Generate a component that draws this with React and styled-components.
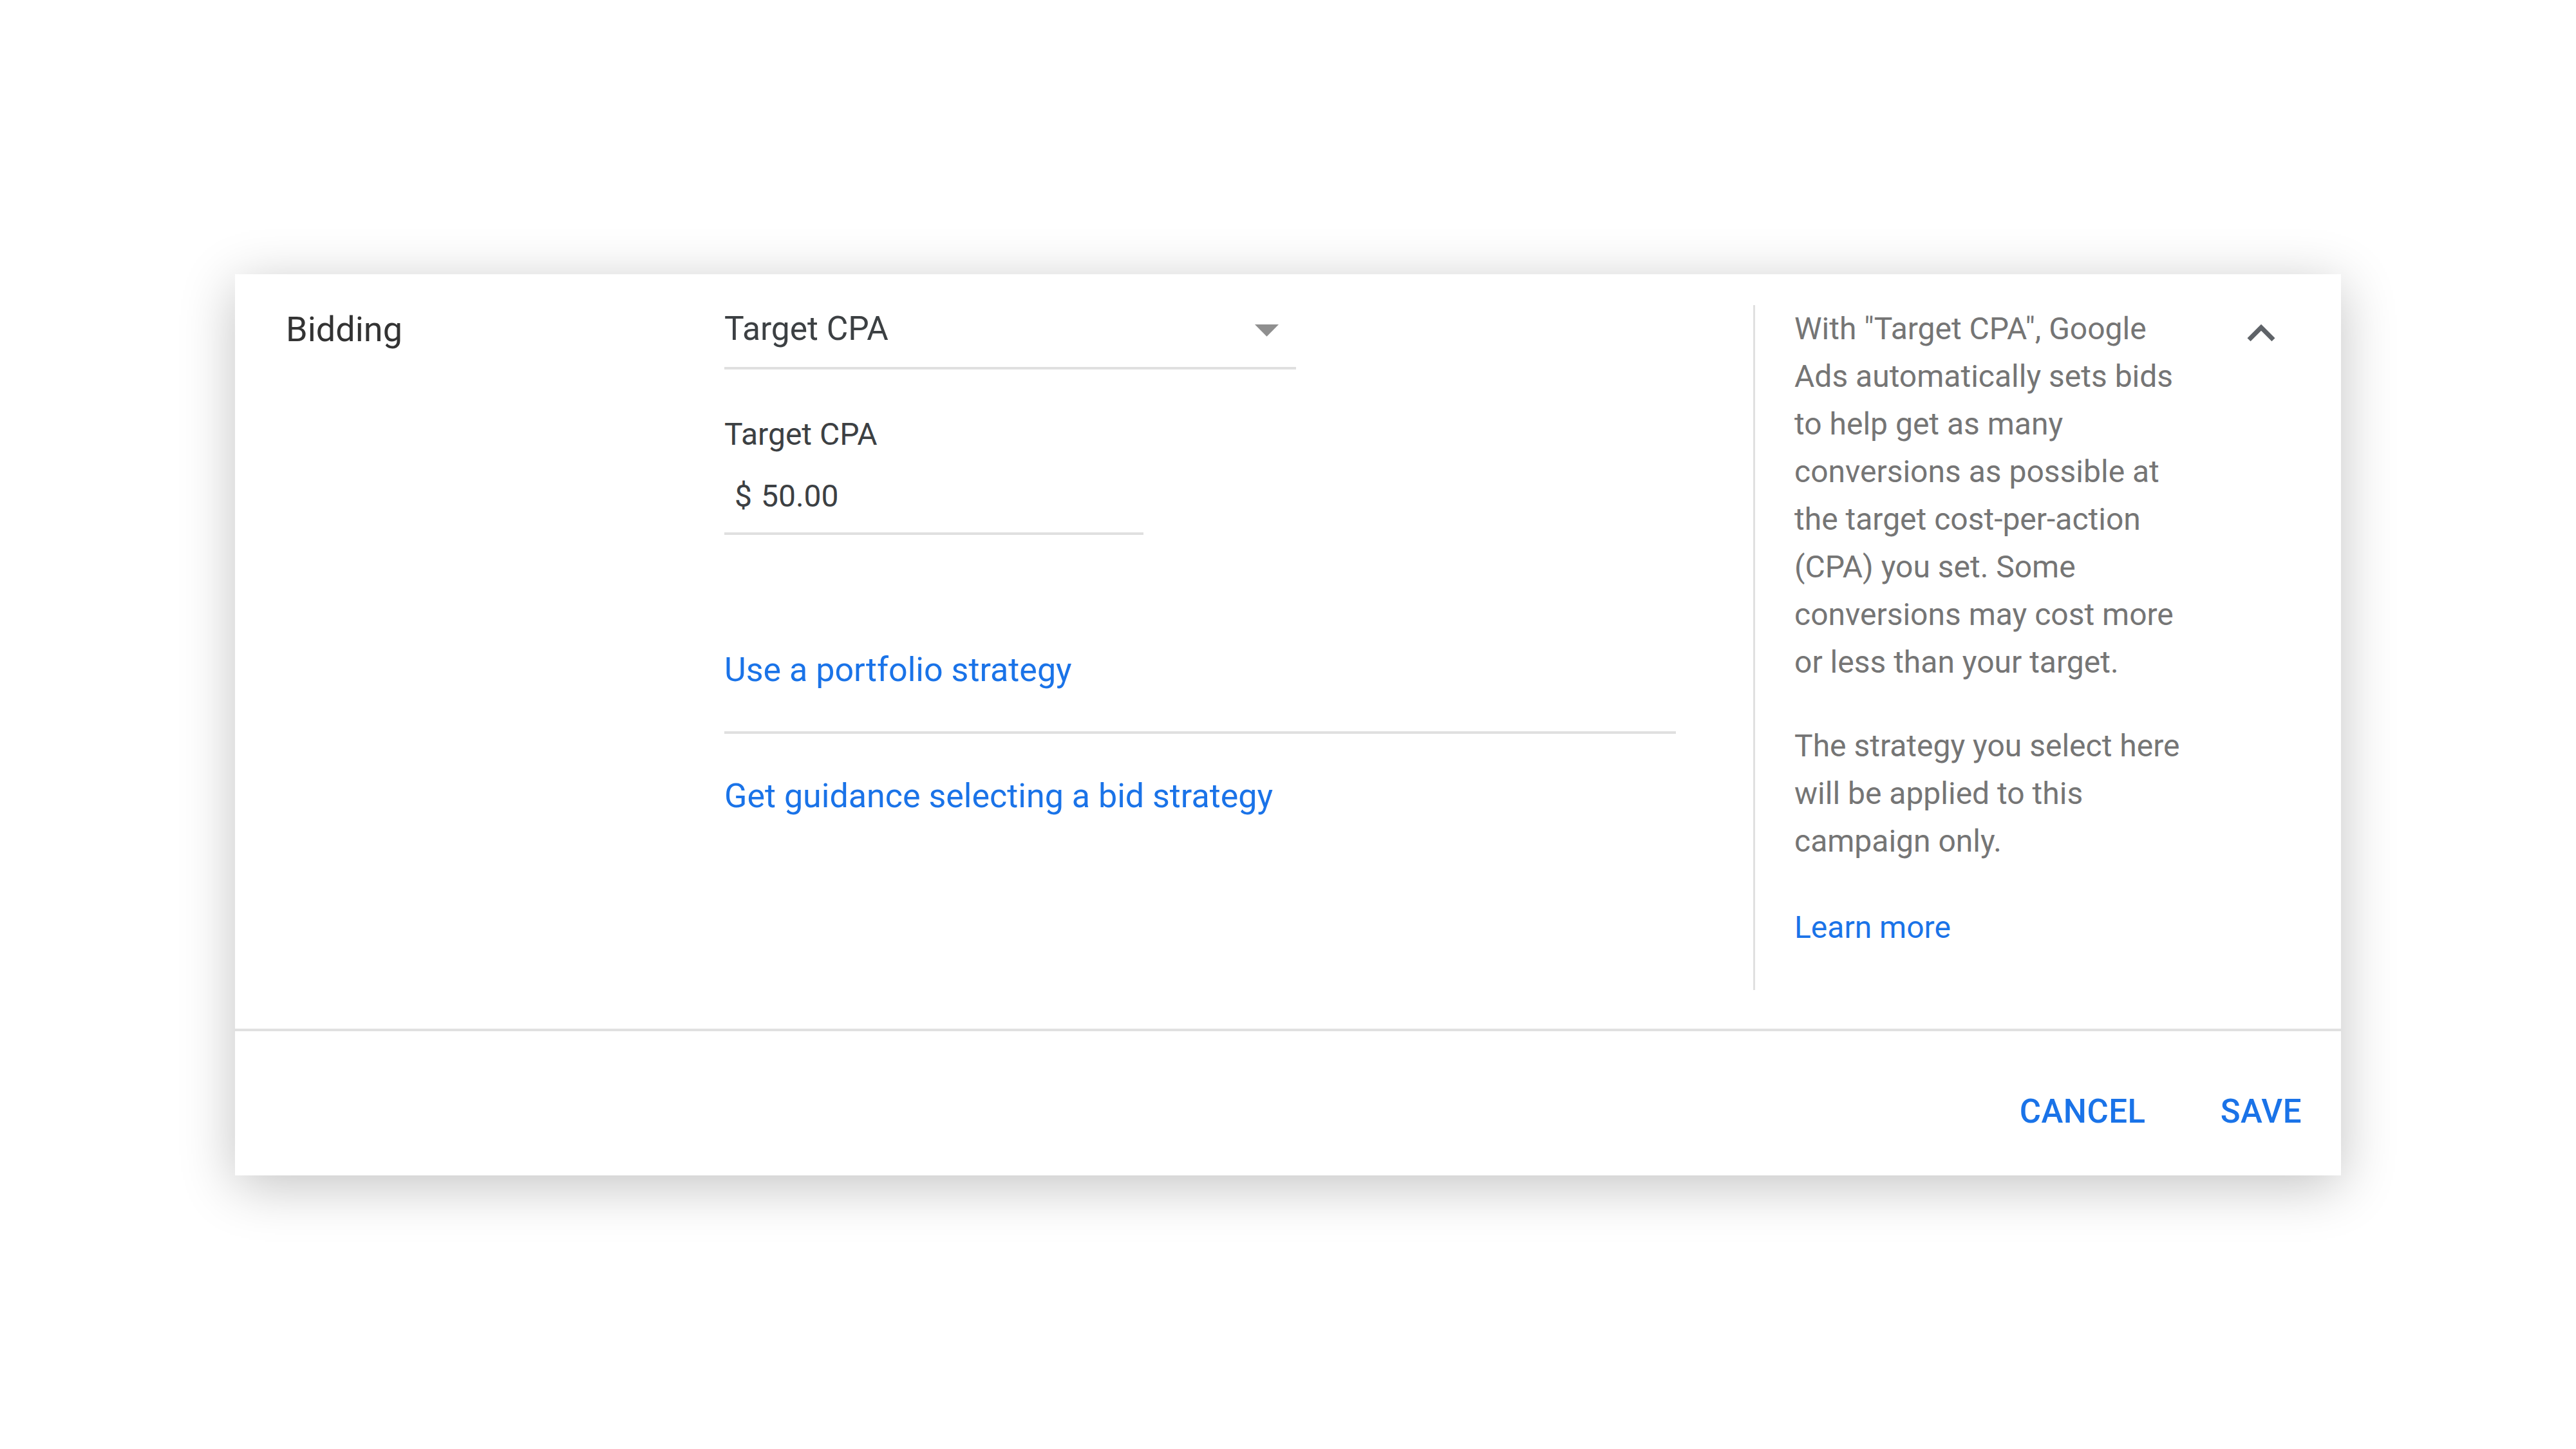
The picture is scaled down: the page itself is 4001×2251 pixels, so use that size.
import React from "react";
import styled, { createGlobalStyle } from "styled-components";

const GlobalStyle = createGlobalStyle`
  html, body {
    margin: 0;
    padding: 0;
    background: #fff;
  }
  body {
    font-family: Roboto, "Liberation Sans", Arial, sans-serif;
    -webkit-font-smoothing: antialiased;
  }
`;

const helpLines = [
  'With "Target CPA", Google',
  "Ads automatically sets bids",
  "to help get as many",
  "conversions as possible at",
  "the target cost-per-action",
  "(CPA) you set. Some",
  "conversions may cost more",
  "or less than your target.",
];

const scopeLines = [
  "The strategy you select here",
  "will be applied to this",
  "campaign only.",
];

const App = () => (
  <Page>
    <GlobalStyle />
    <Card>
      <Content>
        <SectionTitle>Bidding</SectionTitle>
        <Main>
          <Select>
            <SelectValue>Target CPA</SelectValue>
            <svg width="89" height="89" viewBox="0 0 24 24">
              <path d="M7 10l5 5 5-5z" fill="#8f8f8f" />
            </svg>
          </Select>
          <FieldLabel>Target CPA</FieldLabel>
          <MoneyInput>
            <Currency>$</Currency>50.00
          </MoneyInput>
          <Link $top={173}>Use a portfolio strategy</Link>
          <Divider />
          <Link $top={60}>Get guidance selecting a bid strategy</Link>
        </Main>
        <HelpPanel>
          <HelpBody>
            <HelpText>
              {helpLines.map((l, i) => (
                <React.Fragment key={i}>
                  {l}
                  <br />
                </React.Fragment>
              ))}
            </HelpText>
            <HelpText $top={56}>
              {scopeLines.map((l, i) => (
                <React.Fragment key={i}>
                  {l}
                  <br />
                </React.Fragment>
              ))}
            </HelpText>
            <HelpLink>Learn more</HelpLink>
          </HelpBody>
          <CollapseBtn aria-label="Collapse">
            <svg width="86" height="86" viewBox="0 0 24 24">
              <path
                d="M12 8l-6 6 1.41 1.41L12 10.83l4.59 4.58L18 14z"
                fill="#5f6368"
              />
            </svg>
          </CollapseBtn>
        </HelpPanel>
      </Content>
      <Footer>
        <TextButton>Cancel</TextButton>
        <TextButton>Save</TextButton>
      </Footer>
    </Card>
  </Page>
);

export default App;

const Page = styled.div`
  width: 4001px;
  height: 2251px;
  padding: 426px 0 0 365px;
  box-sizing: border-box;
`;

const Card = styled.div`
  width: 3271px;
  background: #fff;
  box-shadow: 0 16px 80px rgba(0, 0, 0, 0.24);
  display: flex;
  flex-direction: column;
`;

const Content = styled.div`
  display: flex;
  padding: 48px 0 60px 79px;
  border-bottom: 4px solid #e0e0e0;
`;

const SectionTitle = styled.div`
  width: 681px;
  flex-shrink: 0;
  font-size: 54px;
  line-height: 74px;
  color: #333;
  margin-top: 1px;
`;

const Main = styled.div`
  width: 1478px;
  flex-shrink: 0;
  display: flex;
  flex-direction: column;
  align-items: flex-start;
`;

const Select = styled.div`
  width: 888px;
  height: 100px;
  box-sizing: border-box;
  display: flex;
  align-items: flex-start;
  justify-content: space-between;
  border-bottom: 4px solid #e0e0e0;

  svg {
    margin-top: -7px;
    margin-right: 1px;
  }
`;

const SelectValue = styled.span`
  font-size: 51.5px;
  line-height: 74px;
  color: #3c4043;
`;

const FieldLabel = styled.div`
  margin-top: 71px;
  font-size: 48px;
  line-height: 60px;
  color: #3c4043;
`;

const MoneyInput = styled.div`
  margin-top: 36px;
  width: 651px;
  box-sizing: border-box;
  padding: 0 0 26px 16px;
  border-bottom: 4px solid #e0e0e0;
  font-size: 48px;
  line-height: 60px;
  color: #3c4043;
`;

const Currency = styled.span`
  margin-right: 14px;
`;

const Link = styled.a`
  margin-top: ${(p) => p.$top}px;
  font-size: 52px;
  line-height: 74px;
  color: #1a73e8;
  cursor: pointer;
`;

const Divider = styled.div`
  align-self: stretch;
  height: 4px;
  margin-top: 58px;
  background: #e0e0e0;
`;

const HelpPanel = styled.div`
  flex: 1;
  margin-left: 120px;
  border-left: 3px solid #e0e0e0;
  padding: 0 81px 60px 61px;
  display: flex;
  align-items: flex-start;
  justify-content: space-between;
`;

const HelpBody = styled.div`
  display: flex;
  flex-direction: column;
  align-items: flex-start;
`;

const HelpText = styled.p`
  margin: ${(p) => p.$top || 0}px 0 0;
  font-size: 48px;
  line-height: 74px;
  color: #757575;
  white-space: nowrap;
`;

const HelpLink = styled.a`
  margin-top: 60px;
  font-size: 48px;
  line-height: 74px;
  color: #1a73e8;
  cursor: pointer;
`;

const CollapseBtn = styled.button`
  margin-top: 1px;
  padding: 0;
  border: none;
  background: none;
  width: 86px;
  height: 86px;
  display: flex;
  cursor: pointer;
`;

const Footer = styled.div`
  height: 224px;
  box-sizing: border-box;
  padding: 88px 61px 0 0;
  display: flex;
  justify-content: flex-end;
  align-items: flex-start;
  gap: 116px;
`;

const TextButton = styled.button`
  padding: 0;
  border: none;
  background: none;
  font-family: Roboto, "Liberation Sans", Arial, sans-serif;
  font-size: 51px;
  font-weight: 500;
  line-height: 74px;
  letter-spacing: 0.5px;
  text-transform: uppercase;
  color: #1a73e8;
  cursor: pointer;
`;
